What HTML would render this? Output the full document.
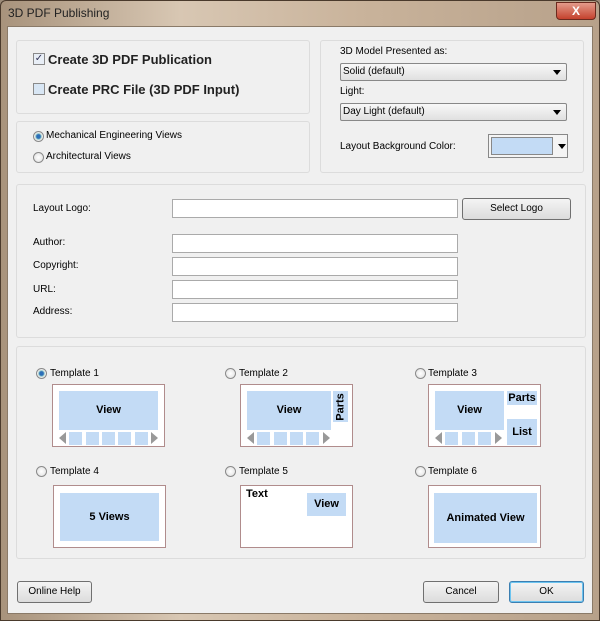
<!DOCTYPE html>
<html><head><style>
*{box-sizing:border-box;margin:0;padding:0}
body{width:600px;height:621px;overflow:hidden;font-family:"Liberation Sans",sans-serif;font-size:11px;color:#000;background:#9c8b78}
.win{position:absolute;left:0;top:0;width:600px;height:621px;background:linear-gradient(90deg,#a8937c,#d8c7b3 30%,#c9b39b 60%,#b7a18a);border:1px solid #4a3a2c;border-radius:6px 6px 0 0}
.title{position:absolute;left:7px;top:5px;font-size:12px;color:#222}
.close{position:absolute;left:555px;top:1px;width:40px;height:18px;background:linear-gradient(#e49b8a,#c4422e);border:1px solid #6b2a1e;border-radius:0 0 4px 4px;color:#fff;font-weight:bold;text-align:center;font-size:12px;line-height:16px}
.client{position:absolute;left:7px;top:26px;width:586px;height:588px;background:#f0f0f0;border:1px solid #8a7a68}
.g{position:absolute;border:1px solid #dcdcdc;border-radius:3px;background:#f0f0f0}
.a{position:absolute;white-space:nowrap}
.in{position:absolute;height:19px;background:#fff;border:1px solid #aaa}
.btn{position:absolute;height:22px;border:1px solid #707070;border-radius:3px;background:linear-gradient(#f4f4f4,#dcdcdc);text-align:center;line-height:20px}
.dd{position:absolute;height:18px;border:1px solid #888;border-radius:2px;background:linear-gradient(#f8f8f8,#e0e0e0);padding-left:2px;line-height:16px}
.dd:after{content:"";position:absolute;right:5px;top:6px;border:4px solid transparent;border-top:5px solid #000;border-bottom:0}
.rad{position:absolute;width:11px;height:11px;border-radius:50%;border:1px solid #8a8a8a;background:radial-gradient(#fff,#ddd)}
.rad.on{background:radial-gradient(#2c6fb8 30%,#9cc 45%,#eee 60%)}
.tb{position:absolute;width:113px;height:63px;background:#fff;border:1px solid #b08c8c}
.bl{position:absolute;background:#c3dbf5;font-weight:bold;font-size:11px;text-align:center}
.sq{position:absolute;width:13px;height:13px;background:#c3dbf5;top:47px}
.tl{position:absolute;top:47px;border:6px solid transparent;border-right:7px solid #999;border-left:0}
.tr{position:absolute;top:47px;border:6px solid transparent;border-left:7px solid #999;border-right:0}
</style></head><body>
<div class="win">
<div class="title">3D PDF Publishing</div>
<div class="close">X</div>
</div>
<div class="client"></div>

<div class="g" style="left:16px;top:40px;width:294px;height:74px"></div>
<div class="a" style="left:33px;top:53px;width:12px;height:12px;border:1px solid #8a8a8a;background:#e8eef6;font-size:10px;line-height:10px;text-align:center;color:#335">✓</div>
<div class="a" style="left:48px;top:52px;font-size:13px;font-weight:bold;color:#222">Create 3D PDF Publication</div>
<div class="a" style="left:33px;top:83px;width:12px;height:12px;border:1px solid #8a8a8a;background:#d8e6f4"></div>
<div class="a" style="left:48px;top:82px;font-size:13px;font-weight:bold;color:#222">Create PRC File (3D PDF Input)</div>

<div class="g" style="left:16px;top:121px;width:294px;height:52px"></div>
<div class="rad on" style="left:33px;top:131px"></div><div class="a" style="left:46px;top:130px;font-size:10px">Mechanical Engineering Views</div>
<div class="rad" style="left:33px;top:152px"></div><div class="a" style="left:46px;top:151px;font-size:10px">Architectural Views</div>

<div class="g" style="left:320px;top:40px;width:264px;height:133px"></div>
<div class="a" style="left:340px;top:46px;font-size:10px">3D Model Presented as:</div>
<div class="dd" style="left:340px;top:63px;width:227px;font-size:10px">Solid (default)</div>
<div class="a" style="left:340px;top:86px;font-size:10px">Light:</div>
<div class="dd" style="left:340px;top:103px;width:227px;font-size:10px">Day Light (default)</div>
<div class="a" style="left:340px;top:141px;font-size:10px">Layout Background Color:</div>
<div class="a" style="left:488px;top:134px;width:80px;height:24px;border:1px solid #888;background:#f4f4f4"></div>
<div class="a" style="left:491px;top:137px;width:62px;height:18px;background:#c3dbf5;border:1px solid #888"></div>
<div class="a" style="left:558px;top:144px;border:4px solid transparent;border-top:5px solid #000;border-bottom:0"></div>

<div class="g" style="left:16px;top:184px;width:570px;height:154px"></div>
<div class="a" style="left:33px;top:203px;font-size:10px">Layout Logo:</div>
<div class="in" style="left:172px;top:199px;width:286px"></div>
<div class="btn" style="left:462px;top:198px;width:109px;font-size:10px">Select Logo</div>
<div class="a" style="left:33px;top:237px;font-size:10px">Author:</div><div class="in" style="left:172px;top:234px;width:286px"></div>
<div class="a" style="left:33px;top:260px;font-size:10px">Copyright:</div><div class="in" style="left:172px;top:257px;width:286px"></div>
<div class="a" style="left:33px;top:284px;font-size:10px">URL:</div><div class="in" style="left:172px;top:280px;width:286px"></div>
<div class="a" style="left:33px;top:306px;font-size:10px">Address:</div><div class="in" style="left:172px;top:303px;width:286px"></div>

<div class="g" style="left:16px;top:346px;width:570px;height:213px"></div>
<div class="rad on" style="left:36px;top:368px"></div><div class="a" style="left:50px;top:368px;font-size:10px">Template 1</div>
<div class="rad" style="left:225px;top:368px"></div><div class="a" style="left:239px;top:368px;font-size:10px">Template 2</div>
<div class="rad" style="left:415px;top:368px"></div><div class="a" style="left:428px;top:368px;font-size:10px">Template 3</div>
<div class="rad" style="left:36px;top:466px"></div><div class="a" style="left:50px;top:466px;font-size:10px">Template 4</div>
<div class="rad" style="left:225px;top:466px"></div><div class="a" style="left:239px;top:466px;font-size:10px">Template 5</div>
<div class="rad" style="left:415px;top:466px"></div><div class="a" style="left:428px;top:466px;font-size:10px">Template 6</div>

<div class="tb" style="left:52px;top:384px">
<div class="bl" style="left:6px;top:6px;width:99px;height:39px;line-height:39px">View</div>
<div class="tl" style="left:6px"></div>
<div class="sq" style="left:16px"></div><div class="sq" style="left:33px"></div><div class="sq" style="left:49px"></div><div class="sq" style="left:65px"></div><div class="sq" style="left:82px"></div>
<div class="tr" style="left:98px"></div>
</div>
<div class="tb" style="left:240px;top:384px">
<div class="bl" style="left:6px;top:6px;width:84px;height:39px;line-height:39px">View</div>
<div class="bl" style="left:92px;top:6px;width:15px;height:31px;"><div style="transform:rotate(-90deg);position:absolute;left:-9px;top:10px;width:33px">Parts</div></div>
<div class="tl" style="left:6px"></div>
<div class="sq" style="left:16px"></div><div class="sq" style="left:33px"></div><div class="sq" style="left:49px"></div><div class="sq" style="left:65px"></div>
<div class="tr" style="left:82px"></div>
</div>
<div class="tb" style="left:428px;top:384px">
<div class="bl" style="left:6px;top:6px;width:69px;height:39px;line-height:39px">View</div>
<div class="bl" style="left:78px;top:6px;width:30px;height:14px;line-height:14px">Parts</div>
<div class="bl" style="left:78px;top:34px;width:30px;height:26px;line-height:26px">List</div>
<div class="tl" style="left:6px"></div>
<div class="sq" style="left:16px"></div><div class="sq" style="left:33px"></div><div class="sq" style="left:49px"></div>
<div class="tr" style="left:66px"></div>
</div>
<div class="tb" style="left:53px;top:485px">
<div class="bl" style="left:6px;top:7px;width:99px;height:48px;line-height:48px">5 Views</div>
</div>
<div class="tb" style="left:240px;top:485px">
<div class="a" style="left:5px;top:2px;font-weight:bold">Text</div>
<div class="bl" style="left:66px;top:7px;width:39px;height:23px;line-height:23px">View</div>
</div>
<div class="tb" style="left:428px;top:485px">
<div class="bl" style="left:5px;top:7px;width:103px;height:50px;line-height:50px">Animated View</div>
</div>

<div class="btn" style="left:17px;top:581px;width:75px;font-size:10px">Online Help</div>
<div class="btn" style="left:423px;top:581px;width:76px;font-size:10px">Cancel</div>
<div class="btn" style="left:509px;top:581px;width:75px;font-size:10px;border-color:#3c7fb1;box-shadow:inset 0 0 0 1px #6cc4f0">OK</div>
</body></html>
